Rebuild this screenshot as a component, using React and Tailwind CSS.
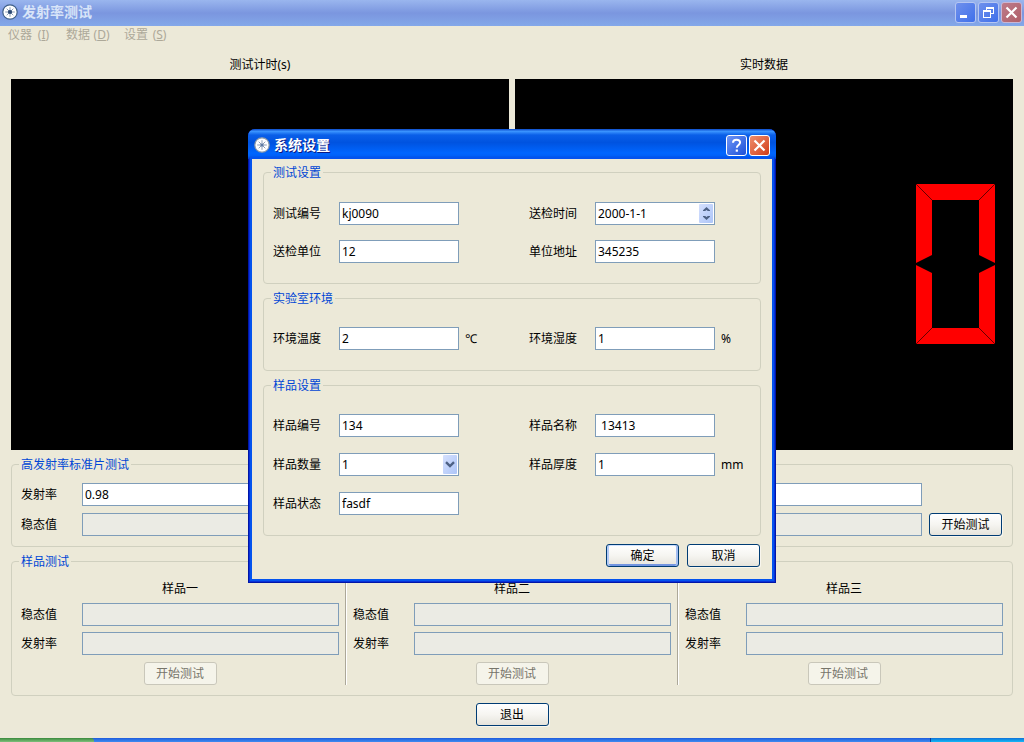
import { useId } from 'react'

const BTN = {
  normal: 'border-[#003c74] bg-gradient-to-b from-white via-[#f6f5f1] to-[#e6e4dc] text-black shadow-[1px_1px_0_#f8f6ee]',
  primary: 'border-[#003c74] bg-gradient-to-b from-white via-[#f6f5f1] to-[#e6e4dc] text-black shadow-[inset_2px_0_0_#b4cbf6,inset_-2px_0_0_#a3bdf0,inset_0_1px_0_#cee0ff,inset_0_-2px_0_#7395e0]',
  disabled: 'border-[#c9c7ba] bg-[#f5f4ea] text-[#77756a]',
}

function Button({ variant = 'normal', children, className = '' }) {
  return (
    <button
      type="button"
      disabled={variant === 'disabled'}
      className={`flex h-[23px] w-[73px] shrink-0 items-center justify-center rounded-[3px] border ${BTN[variant]} ${className}`}
    >
      {children}
    </button>
  )
}

function Group({ title, className = '', children }) {
  return (
    <fieldset className={`min-w-0 rounded-[4px] border border-[#d0d0bf] px-[9px] ${className}`}>
      <legend className="-ml-0.5 h-4 px-0.5 leading-[18px] text-[#0046d5]">{title}</legend>
      {children}
    </fieldset>
  )
}

function TextBox({ id, value = '', readOnly = false }) {
  return (
    <input
      id={id}
      type="text"
      defaultValue={value}
      readOnly={readOnly}
      className={`h-[23px] w-full min-w-0 border border-[#7f9db9] px-0.5 outline-none ${readOnly ? 'bg-[#ebebe4]' : 'bg-white'}`}
    />
  )
}

// Label + box row used in the main window
function Row({ label, value, readOnly, children }) {
  const id = useId()
  return (
    <div className="flex items-center">
      <label htmlFor={id} className="w-[61px] shrink-0">{label}</label>
      <TextBox id={id} value={value} readOnly={readOnly} />
      {children}
    </div>
  )
}

// Label + fixed width control + unit, used in the dialog
function Field({ label, value, unit, kind = 'text' }) {
  const id = useId()
  return (
    <div className="flex items-center">
      <label htmlFor={id} className="w-[66px] shrink-0">{label}</label>
      <div className="relative w-[120px] shrink-0">
        {kind === 'select' ? (
          <>
            <select id={id} defaultValue={value} className="block h-[23px] w-full appearance-none border border-[#7f9db9] bg-white px-0.5 outline-none">
              <option>1</option>
              <option>2</option>
              <option>3</option>
            </select>
            <span className="pointer-events-none absolute top-0.5 right-0.5 flex h-[19px] w-[14px] items-center justify-center rounded-[1px] bg-gradient-to-br from-[#d5e0fd] to-[#adc5f8]">
              <svg className="h-[7px] w-[10px]" viewBox="0 0 10 7">
                <path d="M1 1.2 5 5l4-3.8" fill="none" stroke="#4d6185" strokeWidth="2.4" />
              </svg>
            </span>
          </>
        ) : (
          <TextBox id={id} value={value} />
        )}
        {kind === 'date' && (
          <span className="absolute top-0.5 right-0.5 flex h-[19px] w-[14px] flex-col rounded-[1px] bg-gradient-to-br from-[#d5e0fd] to-[#adc5f8]">
            <button type="button" aria-label="增加" className="flex flex-1 items-center justify-center">
              <svg className="h-1 w-[7px]" viewBox="0 0 7 4">
                <path d="M3.5 0 7 3.2V4H4.8L3.5 2.9 2.2 4H0v-.8z" fill="#4d6185" />
              </svg>
            </button>
            <button type="button" aria-label="减少" className="flex flex-1 items-center justify-center">
              <svg className="h-1 w-[7px]" viewBox="0 0 7 4">
                <path d="M3.5 4 0 .8V0h2.200l1.300 1.100L4.800 0H7v.8z" fill="#4d6185" />
              </svg>
            </button>
          </span>
        )}
      </div>
      {unit && <span className="ml-1.5">{unit}</span>}
    </div>
  )
}

function AppIcon({ small = false }) {
  return (
    <svg className="size-4" viewBox="0 0 16 16">
      <circle cx="8" cy="8" r="7.200" fill="#fff" stroke={small ? '#8d9aa8' : '#3f5f88'} strokeWidth="1.200" />
      <path d="M8 3.200v9.600M3.200 8h9.600M4.700 4.700l6.600 6.600M11.300 4.700l-6.600 6.600" stroke="#7f93b0" strokeWidth=".9" />
      <circle cx="8" cy="8" r={small ? 1.6 : 2.1} fill={small ? '#5f7ba3' : '#2c4872'} />
    </svg>
  )
}

const CAPTION = {
  dim: 'border-[#b5c6f2] bg-gradient-to-br from-[#6f90ec] to-[#3f6fea]',
  dimClose: 'border-[#c9b6d4] bg-gradient-to-br from-[#bd7b8b] to-[#b05f68]',
  blue: 'border-white bg-gradient-to-br from-[#6d94f5] to-[#1c4fd8]',
  red: 'border-white bg-gradient-to-br from-[#ee8d6c] to-[#d13a10]',
}

function CaptionButton({ tone, label, children }) {
  return (
    <button
      type="button"
      aria-label={label}
      className={`flex size-[21px] items-center justify-center rounded-[3px] border ${CAPTION[tone]}`}
    >
      {children}
    </button>
  )
}

function CloseGlyph() {
  return (
    <svg className="size-[13px]" viewBox="0 0 13 13">
      <path d="M1.500 1.500l10 10M11.500 1.500l-10 10" stroke="#fff" strokeWidth="2.200" />
    </svg>
  )
}

const MENUS = [
  { text: '仪器', key: 'I' },
  { text: '数据', key: 'D' },
  { text: '设置', key: 'S' },
]

function MainWindow() {
  return (
    <>
      <header className="flex h-[26px] items-center bg-gradient-to-b from-[#9ab6ee] via-[#7b96df] to-[#83a8e9] pr-0.5 pb-0.5 pl-0.5">
        <AppIcon />
        <h1 className="ml-1 flex-1 text-sm leading-4 font-bold text-[#d8e4f8]">发射率测试</h1>
        <div className="flex gap-0.5">
          <CaptionButton tone="dim" label="最小化">
            <svg className="size-[13px]" viewBox="0 0 13 13">
              <path d="M1 9h7v3H1z" fill="#fff" />
            </svg>
          </CaptionButton>
          <CaptionButton tone="dim" label="还原">
            <svg className="size-[13px]" viewBox="0 0 13 13">
              <path d="M4 2h8v1H4zM4 1h8v1H4zM11 3h1v5h-1zM9 7h2v1H9zM4 3h1v1H4z" fill="#fff" />
              <path d="M1 4h8v8H1zM2 6v5h6V6z" fill="#fff" fillRule="evenodd" />
            </svg>
          </CaptionButton>
          <CaptionButton tone="dimClose" label="关闭"><CloseGlyph /></CaptionButton>
        </div>
      </header>

      <nav className="flex h-[18px] items-center gap-3.5 px-2 text-[#aca899]">
        {MENUS.map((m) => (
          <button key={m.key} type="button" disabled className="flex items-center gap-[3px]">
            {m.text}
            <span className="w-[17px]">(<u>{m.key}</u>)</span>
          </button>
        ))}
      </nav>

      <main className="flex flex-1 flex-col px-[11px] pt-[13px] pb-3">
        <div className="grid min-h-[240px] flex-1 grid-cols-2 gap-x-1.5">
          <section className="flex flex-col gap-1.5">
            <h2 className="text-center">测试计时(s)</h2>
            <div className="flex-1 bg-black" />
          </section>
          <section className="flex flex-col gap-1.5">
            <h2 className="text-center">实时数据</h2>
            <div className="flex flex-1 items-center justify-end bg-black pr-[18px] pb-0.5">
              <svg className="h-[160px] w-[79px]" viewBox="0 0 79 160" role="img" aria-label="0">
                <g fill="#f00">
                  <path d="M0 0h79L63 16H16z" />
                  <path d="M0 0l16 16v55L0 79z" />
                  <path d="M79 0L63 16v55l16 8z" />
                  <path d="M0 81l16 8v55L0 160z" />
                  <path d="M79 81l-16 8v55l16 16z" />
                  <path d="M0 160h79l-16-16H16z" />
                </g>
                <path d="M0 0l16 16M79 0L63 16M0 160l16-16M79 160l-16-16" stroke="#600" />
              </svg>
            </div>
          </section>
        </div>

        <Group title="高发射率标准片测试" className="mt-1.5 pb-2.5">
          <div className="flex flex-col gap-[7px] pt-[11px] pr-px">
            <div className="pr-20">
              <Row label="发射率" value="0.98" />
            </div>
            <Row label="稳态值" readOnly>
              <Button className="ml-[7px]">开始测试</Button>
            </Row>
          </div>
        </Group>

        <Group title="样品测试" className="mt-1.5 pb-2.5">
          <div className="grid grid-cols-[1fr_2px_1fr_2px_1fr] gap-x-1.5 pt-[11px]">
            <Sample title="样品一" />
            <div className="border-l border-[#aca899] bg-white" />
            <Sample title="样品二" />
            <div className="border-l border-[#aca899] bg-white" />
            <Sample title="样品三" />
          </div>
        </Group>

        <Button className="mt-[7px] self-center">退出</Button>
      </main>

      <footer className="flex h-1 bg-gradient-to-b from-[#1f5bdc] to-[#3f8cf0]">
        <div className="w-[94px] rounded-tr-[3px] bg-gradient-to-b from-[#3a8a3c] to-[#7dc07c]" />
        <div className="flex-1" />
        <div className="w-[94px] border-l border-[#0a3f9c] bg-gradient-to-b from-[#1270d8] to-[#18b9f5]" />
      </footer>
    </>
  )
}

function Sample({ title }) {
  return (
    <section className="flex min-w-0 flex-col gap-[7px]">
      <h3 className="h-4 text-center leading-[18px]">{title}</h3>
      <div className="flex flex-col gap-1.5">
        <Row label="稳态值" readOnly />
        <Row label="发射率" readOnly />
      </div>
      <Button variant="disabled" className="self-center">开始测试</Button>
    </section>
  )
}

function SettingsDialog() {
  return (
    <div
      role="dialog"
      aria-labelledby="settings-title"
      className="absolute inset-x-0 top-[129px] mx-auto w-[528px] rounded-t-[7px] bg-[#0831d9] shadow-[inset_1px_-1px_0_#0016a8,inset_-1px_0_0_#0016a8]"
    >
      <header className="flex h-[30px] items-center rounded-t-[7px] bg-[linear-gradient(to_bottom,#0a48c8_0%,#3a94ff_8%,#0a5fe8_20%,#0053e0_45%,#0066ff_80%,#0060f8_90%,#003cc8_100%)] px-1.5 pt-0.5">
        <AppIcon small />
        <h2 id="settings-title" className="ml-1 flex-1 text-sm leading-4 font-bold text-white [text-shadow:1px_1px_0_#0a1883]">系统设置</h2>
        <div className="flex gap-0.5">
          <CaptionButton tone="blue" label="帮助">
            <svg className="size-[15px]" viewBox="0 0 15 15">
              <path d="M4 4.800C4 2.700 5.500 1.700 7.500 1.700s3.600 1.100 3.600 2.900c0 2.300-3.300 2.400-3.300 5.200" fill="none" stroke="#fff" strokeWidth="2" />
              <path d="M6.700 11.500h2.200v2.200H6.700z" fill="#fff" />
            </svg>
          </CaptionButton>
          <CaptionButton tone="red" label="关闭"><CloseGlyph /></CaptionButton>
        </div>
      </header>

      <div className="px-1 pb-1">
        <form className="bg-[#ece9d8] px-[11px] pt-[5px] pb-3 shadow-[0_0_0_2px_#0453ee]">
          <Group title="测试设置" className="pb-5">
            <div className="grid grid-cols-[256px_1fr] gap-y-[15px] pt-[22px]">
              <Field label="测试编号" value="kj0090" />
              <Field label="送检时间" value="2000-1-1" kind="date" />
              <Field label="送检单位" value="12" />
              <Field label="单位地址" value="345235" />
            </div>
          </Group>

          <Group title="实验室环境" className="mt-1.5 pb-5">
            <div className="grid grid-cols-[256px_1fr] pt-[21px]">
              <Field label="环境温度" value="2" unit="℃" />
              <Field label="环境湿度" value="1" unit="%" />
            </div>
          </Group>

          <Group title="样品设置" className="mt-1.5 pb-5">
            <div className="grid grid-cols-[256px_1fr] gap-y-4 pt-[21px]">
              <Field label="样品编号" value="134" />
              <Field label="样品名称" value=" 13413" />
              <Field label="样品数量" value="1" kind="select" />
              <Field label="样品厚度" value="1" unit="mm" />
              <Field label="样品状态" value="fasdf" />
            </div>
          </Group>

          <div className="mt-2 flex justify-end gap-2 pr-px">
            <Button variant="primary">确定</Button>
            <Button>取消</Button>
          </div>
        </form>
      </div>
    </div>
  )
}

export default function App() {
  return (
    <div className="relative flex min-h-screen flex-col bg-[#ece9d8] font-['Noto_Sans','Noto_Sans_CJK_SC',sans-serif] text-xs leading-4 text-black">
      <MainWindow />
      <SettingsDialog />
    </div>
  )
}
